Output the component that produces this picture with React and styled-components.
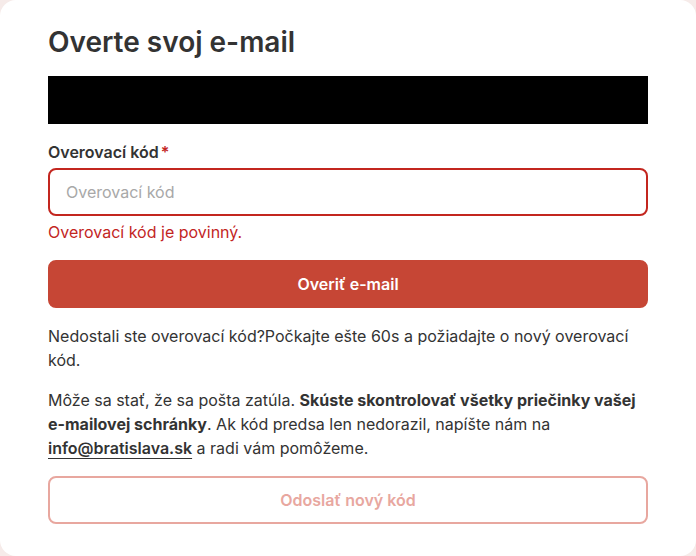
import React from "react";
import styled, { createGlobalStyle } from "styled-components";

const GlobalStyle = createGlobalStyle`
  html, body {
    margin: 0;
    padding: 0;
    background: #f6ebe9;
  }
  body {
    font-family: Inter, "Noto Sans", sans-serif;
    color: #333;
  }
  * { box-sizing: border-box; }
`;

const Card = styled.div`
  width: 696px;
  height: 556px;
  background: #fff;
  border-radius: 16px;
  padding: 24px 48px;
  display: flex;
  flex-direction: column;
`;

const Title = styled.h1`
  margin: 0;
  font-size: 28px;
  line-height: 36px;
  font-weight: 600;
  color: #333;
`;

const Redacted = styled.div`
  margin-top: 16px;
  height: 48px;
  background: #000;
`;

const Field = styled.div`
  margin-top: 16px;
  display: flex;
  flex-direction: column;
`;

const Label = styled.label`
  font-size: 16px;
  line-height: 24px;
  font-weight: 600;
  color: #333;
  margin-bottom: 4px;
`;

const Star = styled.span`
  color: #c3261f;
  margin-left: 2px;
`;

const Input = styled.input`
  height: 48px;
  border: 2px solid #c3261f;
  border-radius: 8px;
  padding: 0 16px;
  font-family: inherit;
  font-size: 16px;
  color: #333;
  outline: none;
  &::placeholder {
    color: #a8a8a8;
  }
`;

const ErrorText = styled.div`
  margin-top: 4px;
  font-size: 16px;
  line-height: 24px;
  color: #c3261f;
`;

const Button = styled.button`
  height: 48px;
  border-radius: 8px;
  font-family: inherit;
  font-size: 16px;
  font-weight: 600;
  cursor: pointer;
  border: 2px solid ${(p) => (p.$outline ? "#e8a79f" : "#c64635")};
  background: ${(p) => (p.$outline ? "#fff" : "#c64635")};
  color: ${(p) => (p.$outline ? "#e8a79f" : "#fff")};
  margin-top: ${(p) => p.$mt}px;
`;

const Text = styled.p`
  margin: ${(p) => p.$mt}px 0 0;
  font-size: 16px;
  line-height: 24px;
  color: #333;
`;

const Link = styled.a`
  color: #333;
  font-weight: 600;
  text-decoration: underline;
  text-underline-offset: 4px;
`;

export default function App() {
  return (
    <>
      <GlobalStyle />
      <Card>
        <Title>Overte svoj e-mail</Title>
        <Redacted />
        <Field>
          <Label>
            Overovací kód<Star>*</Star>
          </Label>
          <Input placeholder="Overovací kód" />
          <ErrorText>Overovací kód je povinný.</ErrorText>
        </Field>
        <Button $mt={16}>Overiť e-mail</Button>
        <Text $mt={16}>
          Nedostali ste overovací kód?Počkajte ešte 60s a požiadajte o nový
          overovací kód.
        </Text>
        <Text $mt={16}>
          Môže sa stať, že sa pošta zatúla.{" "}
          <strong>Skúste skontrolovať všetky priečinky vašej e-mailovej schránky</strong>.
          Ak kód predsa len nedorazil, napíšte nám na{" "}
          <Link href="#">info@bratislava.sk</Link> a radi vám pomôžeme.
        </Text>
        <Button $outline $mt={16}>
          Odoslať nový kód
        </Button>
      </Card>
    </>
  );
}
